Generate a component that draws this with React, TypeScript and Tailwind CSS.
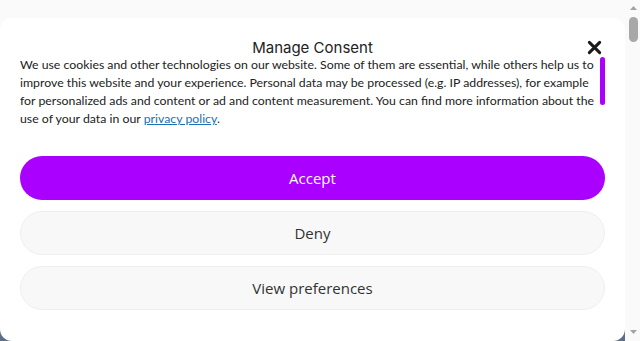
export default function App() {
  return (
    <div className="flex h-screen overflow-hidden bg-[#5b7088]">
      <div className="min-w-0 flex-1">
        <div className="bg-[linear-gradient(to_bottom,#fafafa_50%,#5b7088_50%)] pt-[18px]">
          <div className="relative rounded-[12px] bg-white px-5 pb-[31px] pt-[21px]">
            <h2 className="text-center text-[15px] leading-[18px] text-[#222] font-['Inter',sans-serif]">
              Manage Consent
            </h2>
            <button className="absolute right-[23px] top-[22px] text-[#1a1a1a]" aria-label="Close">
              <svg width="15" height="15" viewBox="0 0 16 16" fill="none" stroke="currentColor" strokeWidth="3.2" strokeLinecap="round">
                <path d="M2.5 2.5l11 11M13.5 2.5l-11 11" />
              </svg>
            </button>
            <div className="-mt-px flex items-start gap-[2px]">
              <p className="flex-1 text-[12.3px] leading-[18px] text-[#222] font-['Lato',sans-serif]">
                We use cookies and other technologies on our website. Some of them are essential, while others help us to
                improve this website and your experience. Personal data may be processed (e.g. IP addresses), for example
                for personalized ads and content or ad and content measurement. You can find more information about the
                use of your data in our <a href="#" className="text-[#1a6fb5] underline">privacy policy</a>.
              </p>
              <div className="mt-px h-[48px] w-[5px] shrink-0 rounded-full bg-[#a900ff]" />
            </div>
            <div className="mt-[28px] flex flex-col gap-[11px] font-['Open_Sans',sans-serif] text-[15px]">
              <button className="h-[44px] rounded-full bg-[#a900ff] text-white">Accept</button>
              <button className="h-[44px] rounded-full border border-[#efefef] bg-[#f8f8f8] text-[#333]">Deny</button>
              <button className="h-[44px] rounded-full border border-[#efefef] bg-[#f8f8f8] text-[#333]">
                View preferences
              </button>
            </div>
          </div>
        </div>
      </div>
      <div className="flex w-[15px] shrink-0 flex-col items-center bg-[#fafafa] pt-[6px] pb-[7px]">
        <svg width="7" height="4" viewBox="0 0 7 4" className="ml-px">
          <path d="M3.5 0L7 4H0z" fill="#a3a3a3" />
        </svg>
        <div className="ml-px mt-[7px] h-[25px] w-[9px] rounded-full bg-[#a8a8a8]" />
        <div className="flex-1" />
        <svg width="7" height="4" viewBox="0 0 7 4" className="ml-px">
          <path d="M0 0h7L3.5 4z" fill="#a3a3a3" />
        </svg>
      </div>
    </div>
  );
}
